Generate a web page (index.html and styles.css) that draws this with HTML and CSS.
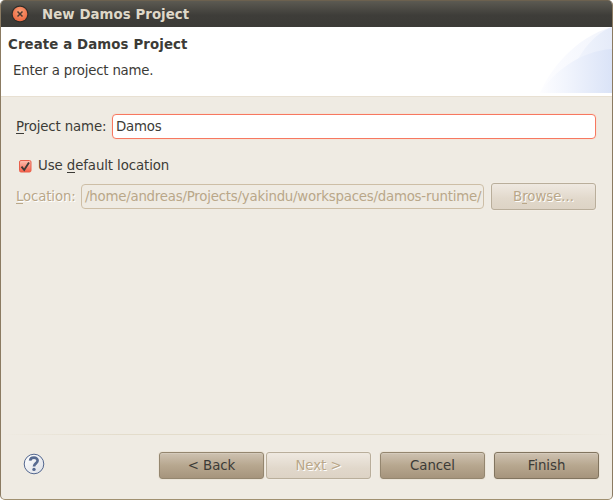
FILE: index.html
```html
<!DOCTYPE html>
<html lang="en">
<head>
<meta charset="utf-8">
<title>New Damos Project</title>
<link rel="stylesheet" href="styles.css">
</head>
<body>
<div class="window">
  <header class="titlebar">
    <svg class="close" width="18" height="18" viewBox="0 0 18 18">
      <defs><radialGradient id="orange" cx="50%" cy="35%" r="65%"><stop offset="0" stop-color="#f9a078"/><stop offset="1" stop-color="#ee6840"/></radialGradient></defs>
      <circle cx="9" cy="9" r="8.5" fill="#2f2e2a"/>
      <circle cx="9" cy="9" r="7.3" fill="url(#orange)"/>
      <path d="M6.5 6.5l5 5M11.5 6.5l-5 5" stroke="#4b3a31" stroke-width="1.5"/>
    </svg>
    <span>New Damos Project</span>
  </header>
  <section class="banner">
    <div>
      <h1>Create a Damos Project</h1>
      <p>Enter a project name.</p>
    </div>
    <svg class="art" width="75" height="66" viewBox="0 0 75 66">
      <defs>
        <linearGradient id="sweep"><stop offset="0" stop-color="#fdfdff"/><stop offset="1" stop-color="#f1f4fc"/></linearGradient>
        <linearGradient id="steep"><stop offset="0.1" stop-color="#f3f6fd"/><stop offset="1" stop-color="#e5ebf9"/></linearGradient>
        <linearGradient id="low"><stop offset="0" stop-color="#fdfdff"/><stop offset="0.35" stop-color="#f2f5fd"/><stop offset="1" stop-color="#dae3f7"/></linearGradient>
      </defs>
      <path d="M3 66C12 44 38 10 75 0V66Z" fill="url(#sweep)"/>
      <path d="M28 66C34 38 52 8 75 0V66Z" fill="url(#steep)"/>
      <path d="M3 66C16 46 42 24 75 22V66Z" fill="url(#low)"/>
    </svg>
  </section>
  <main class="content">
    <div class="row name-row">
      <label><u>P</u>roject name:</label>
      <div class="field active">Damos</div>
    </div>
    <div class="row check-row">
      <svg width="13" height="13" viewBox="0 0 13 13">
        <defs><linearGradient id="box" x2="0" y2="1"><stop offset="0" stop-color="#fbc1b2"/><stop offset="1" stop-color="#f75f48"/></linearGradient></defs>
        <rect x=".5" y=".5" width="11.5" height="11.5" rx="1.5" fill="url(#box)" stroke="#e8604c"/>
        <path d="M2.5 6.7L5.2 10L10 2.5" fill="none" stroke="#3c3b37" stroke-width="1.9"/>
      </svg>
      <span>Use <u>d</u>efault location</span>
    </div>
    <div class="row location-row">
      <label><u>L</u>ocation:</label>
      <div class="field disabled">/home/andreas/Projects/yakindu/workspaces/damos-runtime/</div>
      <div class="button off"><span>B<u>r</u>owse...</span></div>
    </div>
  </main>
  <footer class="footer">
    <svg class="help" width="22" height="22" viewBox="0 0 22 22">
      <defs><linearGradient id="glass" x2="1" y2="1"><stop offset="0" stop-color="#fff"/><stop offset="1" stop-color="#dcdfe5"/></linearGradient></defs>
      <circle cx="11" cy="11" r="9.8" fill="url(#glass)" stroke="#53678f" stroke-width="1"/>
      <path d="M7.1 7.7C7.5 3.5 14.8 3.8 14.6 7.8C14.5 10.5 11 10.4 11 13.6" fill="none" stroke="#586b91" stroke-width="2.7"/>
      <circle cx="11" cy="16.4" r="1.7" fill="#586b91"/>
    </svg>
    <div class="button">&lt; Back</div>
    <div class="button off next">Next &gt;</div>
    <div class="button cancel">Cancel</div>
    <div class="button finish">Finish</div>
  </footer>
</div>
</body>
</html>
```
FILE: styles.css
```css
* { box-sizing: border-box; }
body {
  margin: 0;
  background: #fff;
  color: #3c3b37;
  font: 13.33px/16px "DejaVu Sans", sans-serif;
}
.window {
  width: 613px;
  height: 500px;
  display: flex;
  flex-direction: column;
  overflow: hidden;
  border: 1px solid #8b7b62;
  border-top: 0;
  border-bottom-color: #a09070;
  border-radius: 5px;
  background: #efebe3;
}
.titlebar {
  height: 27px;
  flex: none;
  display: flex;
  align-items: center;
  gap: 13px;
  padding: 1px 0 0 10px;
  border-top: 1px solid #6c614f;
  background: linear-gradient(#5c5a52, #3e3d39 55%, #3c3b37);
  color: #dfd8c8;
  font-weight: bold;
  letter-spacing: 0.06px;
}
.close { margin-top: -2px; }
.banner {
  height: 70px;
  flex: none;
  display: flex;
  justify-content: space-between;
  background: #fff;
  border-bottom: 1px solid #e8e0d2;
}
.banner h1 { margin: 10px 0 0 7px; font-size: 13.33px; line-height: 16px; letter-spacing: 0.11px; }
.banner p { margin: 10px 0 0 12px; letter-spacing: -0.22px; }
.content { padding: 17px 16px 0 15px; letter-spacing: -0.22px; }
.row { display: flex; align-items: center; }
u { text-decoration: none; box-shadow: inset 0 -1px currentColor; }
.name-row { height: 25px; }
.name-row label { width: 96px; letter-spacing: -0.14px; }
.check-row { gap: 7px; height: 16px; margin: 19px 0 0 3px; }
.check-row svg { margin-top: 1px; }
.check-row span { margin-left: -1px; letter-spacing: -0.1px; }
.location-row { height: 27px; margin-top: 9px; color: #b9a789; }
.location-row label { width: 65px; text-shadow: 1px 1px #fff; letter-spacing: -0.15px; }
.field {
  flex: 1;
  height: 25px;
  padding: 4px 0 0 3px;
  border-radius: 4px;
  white-space: nowrap;
}
.active { background: #fff; border: 1px solid #f77860; box-shadow: 0 0 0 1px #f3e5d9; }
.disabled { flex: none; width: 403px; margin-right: 7px; border: 1px solid #cdbea6; }
.button {
  width: 105px;
  height: 27px;
  flex: none;
  display: flex;
  align-items: center;
  justify-content: center;
  border: 1px solid #94866f;
  border-radius: 3px;
  background: linear-gradient(#cec2b1, #b7a78f 50%, #a6947c);
  box-shadow: 0 0 0 1px #ece5d9, inset 0 1px #d4cabb;
  letter-spacing: -0.05px;
}
.off {
  border-color: #b9ae9b;
  background: linear-gradient(#efe9e1, #e1d8cb 60%, #ddd3c5);
  box-shadow: 0 0 0 1px #f2ede5;
  color: #b9a789;
  text-shadow: 1px 1px #fff;
}
.footer {
  margin-top: auto;
  height: 65px;
  display: flex;
  align-items: flex-start;
  padding: 18px 13px 0 22px;
  background: linear-gradient(90deg, transparent, #e3dccb 20%, #e3dccb 80%, transparent) 0 0 / 100% 1px no-repeat;
}
.help { margin: 1px auto 0 0; }
.next { margin-left: 2px; }
.cancel, .finish { margin-left: 9px; }
.finish { border-color: #81745f; }
```
